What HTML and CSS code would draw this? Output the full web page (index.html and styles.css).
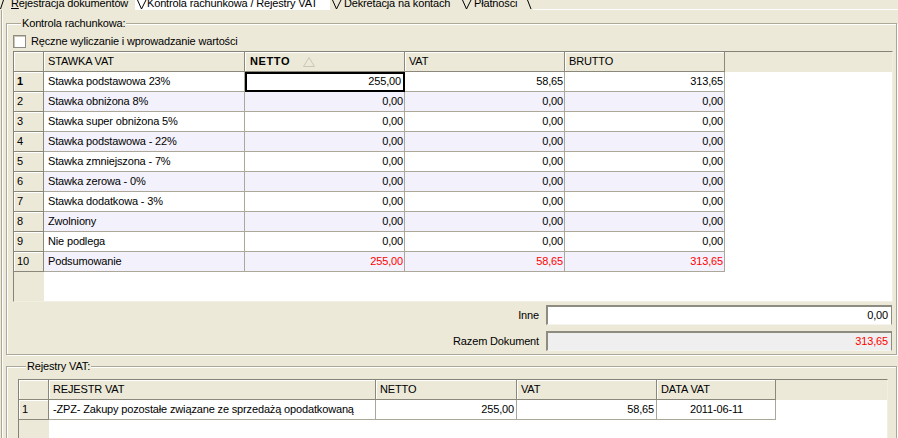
FILE: index.html
```html
<!DOCTYPE html>
<html lang="pl">
<head>
<meta charset="utf-8">
<title>Kontrola rachunkowa / Rejestry VAT</title>
<link rel="stylesheet" href="styles.css">
</head>
<body>
<div class="tabstrip">
  <svg class="sep-l" width="5" height="10" viewBox="0 0 5 10"><path d="M0.5 9 L3.5 0"/></svg>
  <div class="tab t1"><span class="tab-text"><u>R</u>ejestracja dokumentów</span></div>
  <div class="tab t2 active">
    <svg class="vee" width="10" height="10" viewBox="0 0 10 10"><path d="M0.5 0 L4.5 9 L9 0"/></svg>
    <span class="tab-text">Kontrola rachunkowa / Rejestry VAT</span>
  </div>
  <svg class="vee gap" width="10" height="10" viewBox="0 0 10 10"><path d="M0.5 0 L4.5 9 L9 0"/></svg>
  <div class="tab t3"><span class="tab-text">Dekretacja na kontach</span></div>
  <svg class="vee" width="10" height="10" viewBox="0 0 10 10"><path d="M0.5 0 L4.5 9 L9 0"/></svg>
  <div class="tab t4"><span class="tab-text">Płatności</span></div>
  <svg class="sep-r" width="6" height="10" viewBox="0 0 6 10"><path d="M0.5 0 L4 9"/></svg>
  <div class="tab-rest"></div>
</div>

<div class="page">
  <section class="group g1">
    <div class="caption">Kontrola rachunkowa:</div>
    <label class="check-row"><span class="checkbox"></span><span>Ręczne wyliczanie i wprowadzanie wartości</span></label>

    <div class="grid grid-main">
      <div class="row head">
        <div class="c w-ind"></div>
        <div class="c w-name">STAWKA VAT</div>
        <div class="c w-amt sorted"><b>NETTO</b><svg class="sort" width="12" height="10" viewBox="0 0 12 10"><path d="M6 0.5 L11.5 9.5 L0.5 9.5 Z"/></svg></div>
        <div class="c w-amt">VAT</div>
        <div class="c w-amt">BRUTTO</div>
        <div class="fill"></div>
      </div>
      <div class="row">
        <div class="c w-ind ind cur">1</div><div class="c w-name">Stawka podstawowa 23%</div>
        <div class="c w-amt num focus">255,00</div><div class="c w-amt num">58,65</div><div class="c w-amt num">313,65</div><div class="fill"></div>
      </div>
      <div class="row alt">
        <div class="c w-ind ind">2</div><div class="c w-name">Stawka obniżona 8%</div>
        <div class="c w-amt num">0,00</div><div class="c w-amt num">0,00</div><div class="c w-amt num">0,00</div><div class="fill"></div>
      </div>
      <div class="row">
        <div class="c w-ind ind">3</div><div class="c w-name">Stawka super obniżona 5%</div>
        <div class="c w-amt num">0,00</div><div class="c w-amt num">0,00</div><div class="c w-amt num">0,00</div><div class="fill"></div>
      </div>
      <div class="row alt">
        <div class="c w-ind ind">4</div><div class="c w-name">Stawka podstawowa - 22%</div>
        <div class="c w-amt num">0,00</div><div class="c w-amt num">0,00</div><div class="c w-amt num">0,00</div><div class="fill"></div>
      </div>
      <div class="row">
        <div class="c w-ind ind">5</div><div class="c w-name">Stawka zmniejszona - 7%</div>
        <div class="c w-amt num">0,00</div><div class="c w-amt num">0,00</div><div class="c w-amt num">0,00</div><div class="fill"></div>
      </div>
      <div class="row alt">
        <div class="c w-ind ind">6</div><div class="c w-name">Stawka zerowa - 0%</div>
        <div class="c w-amt num">0,00</div><div class="c w-amt num">0,00</div><div class="c w-amt num">0,00</div><div class="fill"></div>
      </div>
      <div class="row">
        <div class="c w-ind ind">7</div><div class="c w-name">Stawka dodatkowa - 3%</div>
        <div class="c w-amt num">0,00</div><div class="c w-amt num">0,00</div><div class="c w-amt num">0,00</div><div class="fill"></div>
      </div>
      <div class="row alt">
        <div class="c w-ind ind">8</div><div class="c w-name">Zwolniony</div>
        <div class="c w-amt num">0,00</div><div class="c w-amt num">0,00</div><div class="c w-amt num">0,00</div><div class="fill"></div>
      </div>
      <div class="row">
        <div class="c w-ind ind">9</div><div class="c w-name">Nie podlega</div>
        <div class="c w-amt num">0,00</div><div class="c w-amt num">0,00</div><div class="c w-amt num">0,00</div><div class="fill"></div>
      </div>
      <div class="row alt">
        <div class="c w-ind ind">10</div><div class="c w-name">Podsumowanie</div>
        <div class="c w-amt num red">255,00</div><div class="c w-amt num red">58,65</div><div class="c w-amt num red">313,65</div><div class="fill"></div>
      </div>
      <div class="rest"><div class="ind-fill"></div></div>
    </div>

    <div class="field">
      <span class="field-label">Inne</span>
      <span class="input">0,00</span>
    </div>
    <div class="field">
      <span class="field-label">Razem Dokument</span>
      <span class="input readonly red">313,65</span>
    </div>
  </section>

  <section class="group g2">
    <div class="caption">Rejestry VAT:</div>
    <div class="grid grid-reg">
      <div class="row head">
        <div class="c r-ind"></div>
        <div class="c r-name">REJESTR VAT</div>
        <div class="c r-netto">NETTO</div>
        <div class="c r-vat">VAT</div>
        <div class="c r-date">DATA VAT</div>
        <div class="fill"></div>
      </div>
      <div class="row">
        <div class="c r-ind ind plain">1</div>
        <div class="c r-name">-ZPZ- Zakupy pozostałe związane ze sprzedażą opodatkowaną</div>
        <div class="c r-netto num">255,00</div>
        <div class="c r-vat num">58,65</div>
        <div class="c r-date center">2011-06-11</div>
        <div class="fill"></div>
      </div>
      <div class="rest"><div class="ind-fill"></div></div>
    </div>
  </section>
</div>
</body>
</html>
```

FILE: styles.css
```css
html, body {
  margin: 0;
  height: 438px;
  overflow: hidden;
}
body {
  background: #ece9d8;
  font-family: "Liberation Sans", Arial, sans-serif;
  font-size: 11px;
  letter-spacing: -0.15px;
  color: #000;
}

/* ---------- tab strip ---------- */
.tabstrip {
  display: flex;
  height: 10px;
  overflow: hidden;
}
.tabstrip svg path {
  fill: none;
  stroke: #000;
  stroke-width: 1;
}
.sep-l { flex: none; }
.sep-r { flex: none; }
.vee { flex: none; }
.vee.gap { margin-left: 2px; }
.tab {
  flex: none;
  display: flex;
  height: 10px;
  overflow: hidden;
  white-space: nowrap;
}
.tab-text {
  display: block;
  line-height: 13px;
  margin-top: -3px;
}
.tab u { text-decoration-thickness: 1px; }
.t1 { width: 130px; padding-left: 6px; box-sizing: border-box; }
.t2 { width: 195px; background: #fff; padding-left: 2px; box-sizing: border-box; }
.t3 { width: 120px; padding-left: 2px; box-sizing: border-box; }
.t4 { width: 55px; padding-left: 2px; box-sizing: border-box; }
.tab-rest {
  flex: 1;
  height: 9px;
  border-bottom: 1px solid #fff;
}

/* ---------- page ---------- */
.page {
  margin-left: 1px;
  border-left: 1px solid #aca899;
  box-shadow: inset 1px 0 0 #fff;
  padding: 13px 1px 0 4px;
}

.group {
  border: 1px solid #aca899;
  box-shadow: inset 1px 1px 0 #fff, 1px 1px 0 #fff;
}
.caption {
  width: fit-content;
  margin: -7px 0 0 8px;
  padding: 0 1px;
  line-height: 13px;
  background: #ece9d8;
}

.g1 {
  padding: 0 3px 3px 6px;
}
.g2 {
  margin-top: 11px;
  padding: 0 8px 0 11px;
}

.check-row {
  display: flex;
  align-items: center;
  gap: 5px;
  margin-top: 5px;
  height: 13px;
  line-height: 13px;
}
.checkbox {
  box-sizing: border-box;
  width: 13px;
  height: 13px;
  background: #fff;
  border: 1px solid #8e8c80;
  box-shadow: inset 1px 1px 0 #c9c6b6;
}

/* ---------- grids ---------- */
.grid {
  display: flex;
  flex-direction: column;
  background: #fff;
  border: 1px solid;
  border-color: #858378 #f1efe2 #f1efe2 #858378;
  box-sizing: border-box;
  overflow: hidden;
}
.grid-main {
  margin-top: 3px;
  height: 251px;
}
.grid-reg {
  margin-top: 6px;
  height: 90px;
}
.row {
  display: flex;
  flex: none;
  height: 20px;
}
.c {
  flex: none;
  box-sizing: border-box;
  height: 20px;
  padding: 0 3px 0 4px;
  line-height: 19px;
  border-right: 1px solid #aca899;
  border-bottom: 1px solid #aca899;
  white-space: nowrap;
  overflow: hidden;
}
.fill { flex: 1; }
.head .c {
  background: #ece9d8;
  box-shadow: inset 1px 1px 0 #fff;
  border-color: #8a877b;
}
.head .fill { background: #ece9d8; }
.row.alt .c { background: #f3f1fb; }
.row .c.ind {
  background: #ece9d8;
  box-shadow: inset 1px 1px 0 #fff;
  border-color: #8a877b;
  padding-left: 3px;
}
.ind.cur { font-weight: bold; }
.ind.plain { padding-left: 6px; }

.num { text-align: right; padding-right: 1px; }
.center { text-align: center; }
.red { color: #f00; }

.focus {
  outline: 2px solid #000;
  outline-offset: -2px;
  padding-right: 3px;
}

.sorted {
  display: flex;
  align-items: center;
  padding-left: 5px;
}
.sorted b { letter-spacing: 0.6px; }
.sort {
  margin-left: 13px;
  margin-top: 1px;
}
.sort path {
  fill: none;
  stroke: #c9c6ba;
  stroke-width: 1;
}

.w-ind { width: 30px; }
.w-name { width: 201px; }
.w-amt { width: 160px; }

.r-ind { width: 30px; }
.r-name { width: 327px; }
.r-netto { width: 141px; }
.r-vat { width: 140px; }
.r-date { width: 119px; }
.grid-reg .num { padding-right: 2px; }

.rest {
  flex: 1;
  display: flex;
}
.ind-fill {
  width: 30px;
  background: #ece9d8;
}

/* ---------- fields ---------- */
.field {
  display: flex;
  justify-content: flex-end;
  align-items: center;
  gap: 7px;
  margin-right: 1px;
  margin-top: 3px;
}
.field + .field { margin-top: 6px; }
.field-label { white-space: nowrap; }
.input {
  box-sizing: border-box;
  width: 346px;
  height: 20px;
  line-height: 17px;
  text-align: right;
  padding-right: 3px;
  background: #fff;
  border-style: solid;
  border-width: 2px 1px 1px 2px;
  border-color: #8e8b80 #8e8b80 #f5f4ee #8e8b80;
}
.input.readonly { background: #efefef; }
```
